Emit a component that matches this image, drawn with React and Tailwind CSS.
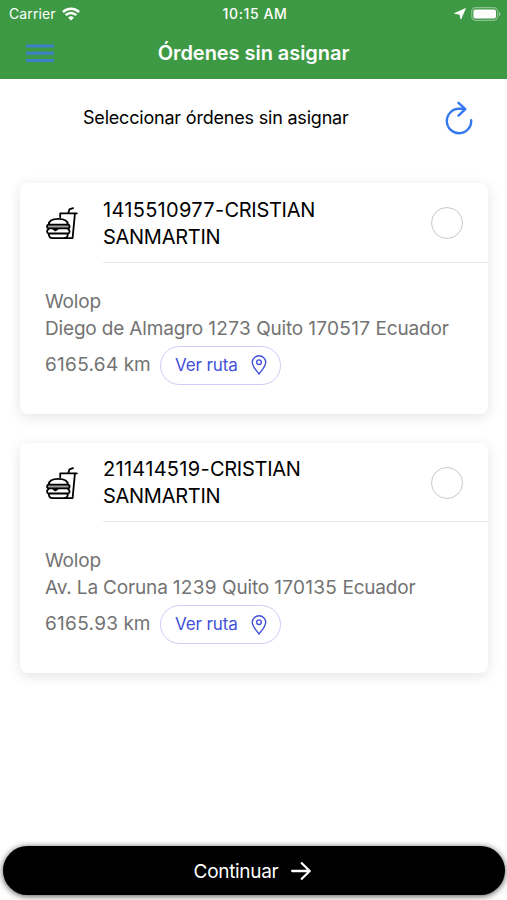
import React from 'react';

const orders = [
  {
    id: '1415510977',
    customer: 'CRISTIAN SANMARTIN',
    company: 'Wolop',
    address: 'Diego de Almagro 1273 Quito 170517 Ecuador',
    distance: '6165.64 km'
  },
  {
    id: '211414519',
    customer: 'CRISTIAN SANMARTIN',
    company: 'Wolop',
    address: 'Av. La Coruna 1239 Quito 170135 Ecuador',
    distance: '6165.93 km'
  }
];

const WifiIcon = () => (
  <svg className="h-[14px] w-[18px]" viewBox="0 0 18 14" fill="none" stroke="white" strokeWidth="2.5">
    <path d="M0.9 5.1a11.5 11.5 0 0 1 16.2 0" />
    <path d="M3.7 8.2a7.5 7.5 0 0 1 10.6 0" />
    <path d="M9 13.6 6.1 10.7a4.1 4.1 0 0 1 5.8 0Z" fill="white" stroke="none" />
  </svg>
);

const LocationIcon = () => (
  <svg className="h-[12px] w-[12px]" viewBox="0 0 12 12" fill="white">
    <path d="M11.4 0.6 6.9 11 5.8 6.3 0.6 5.4Z" stroke="white" strokeWidth="0.8" strokeLinejoin="round" />
  </svg>
);

const BatteryIcon = () => (
  <svg className="h-[14px] w-[30px]" viewBox="0 0 30 14" fill="none">
    <rect x="0.7" y="0.7" width="26" height="12.6" rx="4" stroke="white" strokeOpacity="0.4" strokeWidth="1.2" />
    <rect x="2.4" y="2.4" width="22.6" height="9.2" rx="2" fill="white" />
    <path d="M28 4.8c2 .8 2 3.6 0 4.4Z" fill="white" fillOpacity="0.5" />
  </svg>
);

const MenuIcon = () => (
  <svg className="h-[19px] w-[28px]" viewBox="0 0 28 19" stroke="#407fca" strokeWidth="3">
    <path d="M0 2h28M0 9.2h28M0 16.4h28" />
  </svg>
);

const RefreshIcon = () => (
  <svg className="h-[34px] w-[28px]" viewBox="0 0 28 34" fill="none" stroke="#3579f0" strokeWidth="2.4" strokeLinecap="round" strokeLinejoin="round">
    <path d="M26.2 19.3A12.2 12.2 0 1 1 14 7.8H19.5" />
    <path d="M13.5 1.8 20.3 8.1 13.5 14.6" />
  </svg>
);

const FastFoodIcon = () => (
  <svg className="h-[33px] w-[32px] shrink-0" viewBox="0 0 32 33" fill="none" stroke="black" strokeWidth="1.8" strokeLinecap="round" strokeLinejoin="round">
    {/* cup and straw */}
    <path d="M14.2 10.3V6.4H30.8M28.9 6.8 26.6 31.2H18.8M22.2 6.2 23.4 2.4 27 1.1" />
    {/* burger */}
    <path d="M2.8 17.5C2.8 13.7 6.2 11.9 12.3 11.9S21.8 13.7 21.8 17.5" />
    <rect x="1.1" y="17.6" width="22.4" height="3.8" rx="1.6" fill="#a0a0a0" />
    <path d="M2.3 22.4C0.4 23.4 0.7 26.5 3 26.5H21.6C24 26.5 24.2 23.4 22.3 22.4" />
    <path d="M7.4 22 9.4 23.4 11.5 22" />
    <path d="M2.8 27C2.8 30 4.2 31.2 6.6 31.2H18C20.4 31.2 21.8 30 21.8 27" />
  </svg>
);

const PinIcon = () => (
  <svg className="h-[20px] w-[16px]" viewBox="0 0 16 20" fill="none" stroke="#4350d8" strokeWidth="1.4" strokeLinejoin="round">
    <path d="M8 19C6.4 16.6 1.3 11.8 1.3 7.2a6.7 6.4 0 0 1 13.4 0C14.7 11.8 9.6 16.6 8 19Z" />
    <circle cx="8" cy="7.2" r="2.3" />
  </svg>
);

const ArrowIcon = () => (
  <svg className="h-[18px] w-[20px]" viewBox="0 0 20 18" fill="none" stroke="white" strokeWidth="2.3" strokeLinecap="round" strokeLinejoin="round">
    <path d="M1.2 9H18.6M10.8 1.2 18.7 9 10.8 16.8" />
  </svg>
);

// Numbers are set a little looser than the words around them
const SpacedNumbers = ({ text }) =>
  text.split(/(\d[\d.-]*|\s+)/).map((part, index) =>
    /^\d/.test(part) ? (
      <span key={index} className="tracking-[0.3px]">{part}</span>
    ) : (
      part
    )
  );

const OrderCard = ({ order, selected, onSelect }) => (
  <div className="h-[230.5px] rounded-lg bg-white shadow-[0_3px_14px_rgba(0,0,0,0.11)]">
    <div className="flex h-[79.5px] pl-[26px]">
      <div className="w-[57px] pt-6">
        <FastFoodIcon />
      </div>
      <div className="flex flex-1 items-start justify-between border-b border-[#e8e8e8] pr-[25px]">
        <h2 className="w-[250px] pt-[13.5px] text-[20px] leading-[27px] tracking-[-0.28px] text-black">
          <SpacedNumbers text={`${order.id}-${order.customer}`} />
        </h2>
        <button
          type="button"
          aria-label={order.id}
          aria-pressed={selected}
          onClick={onSelect}
          className={`mt-6 size-[32px] rounded-full border ${selected ? 'border-[#3579f0] bg-[#3579f0]' : 'border-[#c9c9c9]'}`}
        />
      </div>
    </div>

    <div className="pt-[25px] pl-[25px] text-[19px] leading-[27px] tracking-[-0.17px] text-[#737373]">
      <p>{order.company}</p>
      <p className="whitespace-nowrap">
        <SpacedNumbers text={order.address} />
      </p>
      <div className="mt-1 flex items-center gap-[10px]">
        <span className="w-[105px] pb-[1.5px] whitespace-nowrap">
          <SpacedNumbers text={order.distance} />
        </span>
        <button
          type="button"
          className="flex h-[39px] w-[121px] items-center gap-[13px] rounded-full border border-[#cfcbf8] pl-[14px] text-[17px] tracking-[-0.1px] text-[#4350d8]"
        >
          <span className="whitespace-nowrap">Ver ruta</span>
          <PinIcon />
        </button>
      </div>
    </div>
  </div>
);

const App = () => {
  const [selectedId, setSelectedId] = React.useState(null);

  return (
    <div className="flex h-[900px] w-[507px] flex-col overflow-hidden bg-white font-['Inter',sans-serif]">
      <header className="h-[79px] bg-[#3e9945] text-white">
        <div className="grid h-[27px] grid-cols-3 items-center pr-[6px] pl-[9px] text-[14px]">
          <div className="flex items-center gap-[6px]">
            <span className="tracking-[0.1px]">Carrier</span>
            <WifiIcon />
          </div>
          <span className="text-center text-[14px] font-medium tracking-[0.6px]">10:15 AM</span>
          <div className="flex items-center justify-end gap-[5px]">
            <LocationIcon />
            <BatteryIcon />
          </div>
        </div>
        <div className="grid h-[52px] grid-cols-[1fr_auto_1fr] items-center px-[26px]">
          <button type="button" aria-label="Menu">
            <MenuIcon />
          </button>
          <h1 className="text-[20px] font-semibold tracking-[-0.05px]">Órdenes sin asignar</h1>
        </div>
      </header>

      <main className="flex-1">
        <div className="flex h-[78px] items-center justify-between pr-[34px] pl-[83px]">
          <p className="pb-0.5 text-[18px] tracking-[-0.2px] text-black">Seleccionar órdenes sin asignar</p>
          <button type="button" aria-label="Actualizar">
            <RefreshIcon />
          </button>
        </div>
        <div className="flex flex-col gap-[29px] pt-[26px] pr-[19px] pl-5">
          {orders.map((order) => (
            <OrderCard
              key={order.id}
              order={order}
              selected={order.id === selectedId}
              onSelect={() => setSelectedId(order.id)}
            />
          ))}
        </div>
      </main>

      <footer className="pr-[2px] pb-[5px] pl-[3px]">
        <button
          type="button"
          className="flex h-[49px] w-full items-center justify-center gap-[13px] rounded-full bg-black pt-px pr-[3px] text-[19px] tracking-[-0.3px] text-white shadow-[0_1px_6px_rgba(0,0,0,0.7)]"
        >
          <span className="pt-0.5">Continuar</span>
          <ArrowIcon />
        </button>
      </footer>
    </div>
  );
};

export default App;
